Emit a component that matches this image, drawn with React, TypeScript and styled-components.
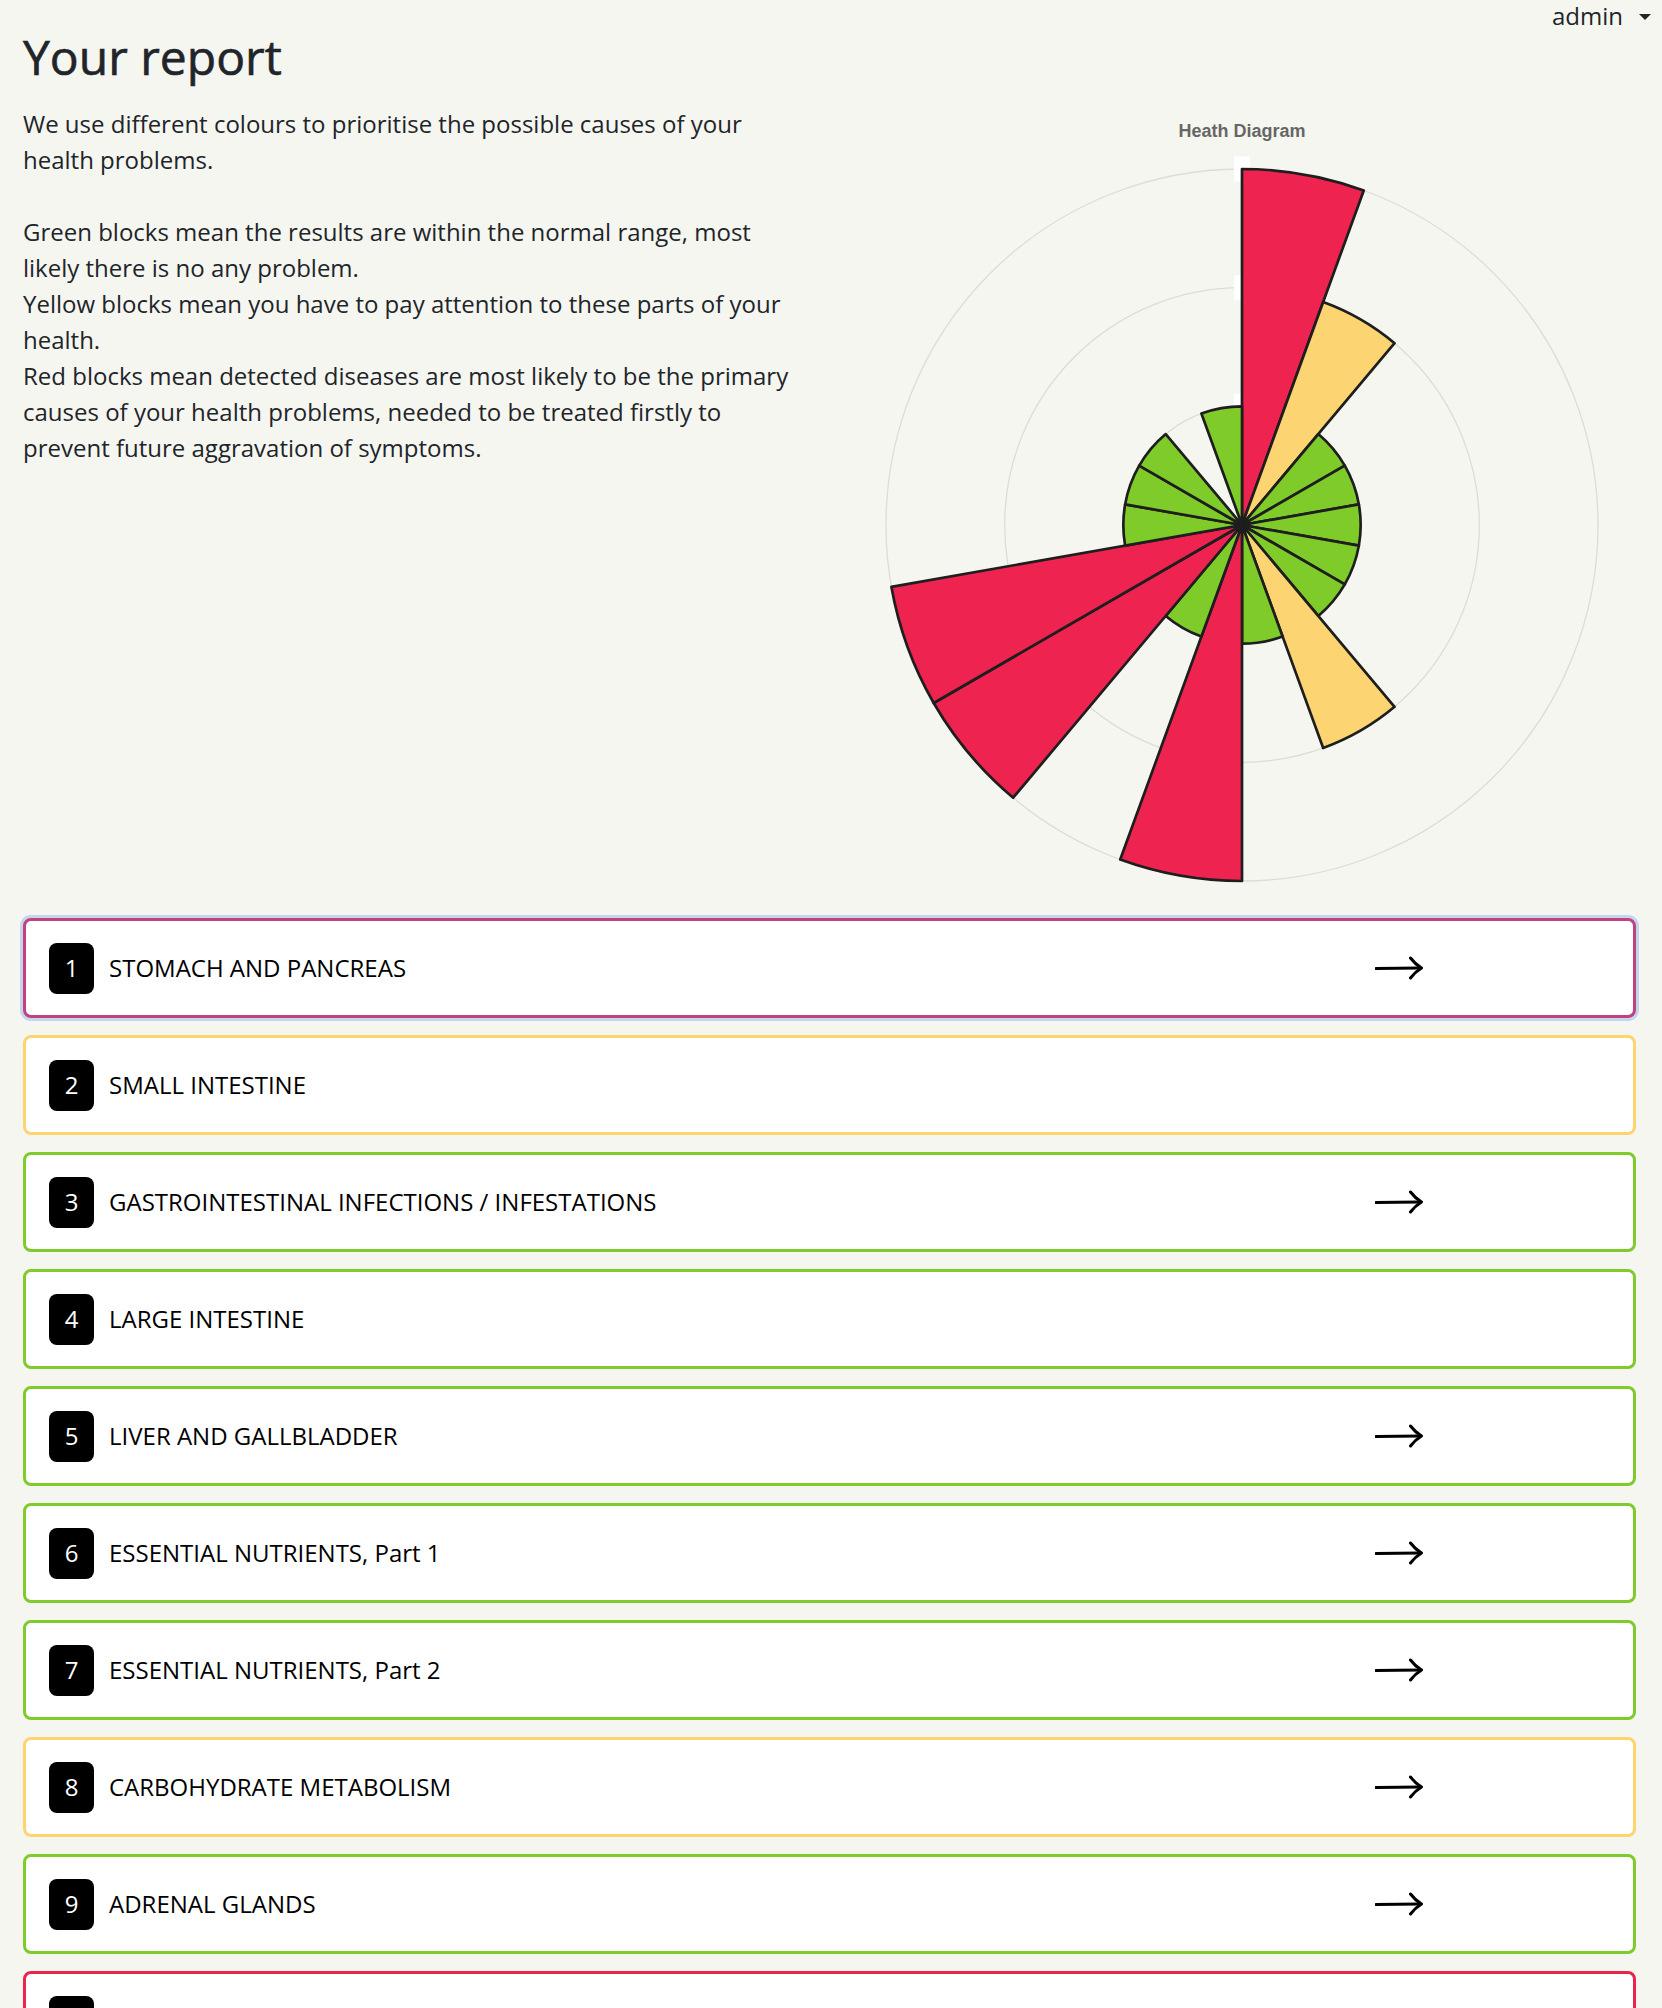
import React from "react";
import styled, { createGlobalStyle, css } from "styled-components";

const GlobalStyle = createGlobalStyle`
  html, body {
    margin: 0;
    padding: 0;
    background: #f6f6f1;
  }
  body {
    font-family: "Open Sans", "Noto Sans", "Liberation Sans", sans-serif;
    color: #212529;
  }
  * { box-sizing: border-box; }
`;

type Level = "red" | "yellow" | "green";

const BORDER: Record<Level, string> = {
  red: "#e8244f",
  yellow: "#fdd46e",
  green: "#7fcb2b",
};

const FILL: Record<Level, string> = {
  red: "#ee2350",
  yellow: "#fcd472",
  green: "#7fcb2a",
};

const TopBar = styled.header`
  display: flex;
  justify-content: flex-end;
  align-items: flex-start;
  height: 28px;
  padding-right: 11px;
`;

const UserToggle = styled.button`
  display: flex;
  align-items: center;
  gap: 16px;
  height: 32px;
  padding: 0;
  border: 0;
  background: transparent;
  font-family: "Open Sans", "Noto Sans", sans-serif;
  font-size: 24px;
  line-height: 32px;
  color: #212529;
  cursor: pointer;
`;

const Caret = styled.span`
  width: 0;
  height: 0;
  border-left: 6px solid transparent;
  border-right: 6px solid transparent;
  border-top: 6px solid #212529;
  margin-top: 1px;
`;

const Main = styled.main`
  padding: 0 26px 40px 23px;
`;

const ReportGrid = styled.section`
  display: grid;
  grid-template-columns: 1fr 1fr;
  column-gap: 37px;
`;

const Intro = styled.div`
  display: flex;
  flex-direction: column;
`;

const Title = styled.h1`
  margin: 0 0 20px 0;
  font-size: 48px;
  line-height: 1.2;
  font-weight: 500;
  color: #212529;
  -webkit-text-stroke: 0.6px #212529;
`;

const Paragraph = styled.p`
  margin: 0 0 36px 0;
  font-size: 24px;
  line-height: 36px;
  color: #212529;
`;

const ChartBox = styled.div`
  height: 890px;
  display: flex;
  justify-content: center;
`;

const CardList = styled.ul`
  list-style: none;
  margin: 0;
  padding: 0;
  display: flex;
  flex-direction: column;
  gap: 17px;
`;

const Card = styled.li<{ $level: Level; $focused?: boolean }>`
  display: flex;
  align-items: center;
  height: 100px;
  padding-left: 23px;
  background: #ffffff;
  border: 3px solid ${(p) => BORDER[p.$level]};
  border-radius: 8px;
  cursor: pointer;
  ${(p) =>
    p.$focused &&
    css`
      border-color: #c4427c;
      box-shadow: 0 0 0 3px #c3d5f0;
    `}
`;

const Badge = styled.span`
  display: flex;
  align-items: center;
  justify-content: center;
  width: 45px;
  height: 51px;
  border-radius: 8px;
  background: #000;
  color: #fff;
  font-size: 24px;
  line-height: 1;
  flex-shrink: 0;
`;

const Label = styled.span`
  flex: 1;
  margin-left: 15px;
  font-size: 24px;
  line-height: 1.3;
  color: #000;
`;

const ArrowSlot = styled.span`
  width: 48px;
  height: 26px;
  margin-right: 210px;
  display: flex;
  align-items: center;
`;

const Arrow = () => (
  <svg width="48" height="26" viewBox="0 0 48 26" fill="none">
    <path d="M1 13.5 L45 13" stroke="#000" strokeWidth="3" strokeLinecap="round" />
    <path
      d="M35.5 3 Q40 9 46.5 13 Q40 17 35.5 23"
      stroke="#000"
      strokeWidth="3"
      strokeLinecap="round"
      strokeLinejoin="round"
    />
  </svg>
);

type Item = { n: number; label: string; level: Level; arrow: boolean };

const ITEMS: Item[] = [
  { n: 1, label: "STOMACH AND PANCREAS", level: "red", arrow: true },
  { n: 2, label: "SMALL INTESTINE", level: "yellow", arrow: false },
  { n: 3, label: "GASTROINTESTINAL INFECTIONS / INFESTATIONS", level: "green", arrow: true },
  { n: 4, label: "LARGE INTESTINE", level: "green", arrow: false },
  { n: 5, label: "LIVER AND GALLBLADDER", level: "green", arrow: true },
  { n: 6, label: "ESSENTIAL NUTRIENTS, Part 1", level: "green", arrow: true },
  { n: 7, label: "ESSENTIAL NUTRIENTS, Part 2", level: "green", arrow: true },
  { n: 8, label: "CARBOHYDRATE METABOLISM", level: "yellow", arrow: true },
  { n: 9, label: "ADRENAL GLANDS", level: "green", arrow: true },
  { n: 10, label: "THYROID GLAND", level: "red", arrow: true },
];

// polar column values, clockwise from north, 20° each
const SECTORS: (Level | null)[] = [
  "red",
  "yellow",
  "green",
  "green",
  "green",
  "green",
  "green",
  "yellow",
  "green",
  "red",
  "green",
  "red",
  "red",
  "green",
  "green",
  "green",
  null,
  "green",
];

const LEVEL_VALUE: Record<Level, number> = { green: 1, yellow: 2, red: 3 };

const CX = 394;
const CY = 497;
const UNIT = 118.67;

function sectorPath(i: number, r: number) {
  const a0 = (i * 20 * Math.PI) / 180;
  const a1 = ((i + 1) * 20 * Math.PI) / 180;
  const x0 = CX + r * Math.sin(a0);
  const y0 = CY - r * Math.cos(a0);
  const x1 = CX + r * Math.sin(a1);
  const y1 = CY - r * Math.cos(a1);
  return `M${CX} ${CY} L${x0.toFixed(2)} ${y0.toFixed(2)} A${r} ${r} 0 0 1 ${x1.toFixed(2)} ${y1.toFixed(2)} Z`;
}

const HealthChart = () => (
  <svg width="788" height="890" viewBox="0 0 788 890">
    <text
      x={CX}
      y={109}
      textAnchor="middle"
      fontFamily='"Liberation Sans", Arial, sans-serif'
      fontSize="18"
      fontWeight="bold"
      fill="#666666"
    >
      Heath Diagram
    </text>
    {[1, 2, 3].map((k) => (
      <circle key={k} cx={CX} cy={CY} r={k * UNIT} fill="none" stroke="#dcdcd8" strokeWidth="1.3" />
    ))}
    {[1, 2, 3].map((k) => (
      <rect key={k} x={CX - 8} y={CY - k * UNIT - 12.5} width="16" height="25" fill="#ffffff" />
    ))}
    {SECTORS.map((lvl, i) =>
      lvl ? (
        <path
          key={i}
          d={sectorPath(i, LEVEL_VALUE[lvl] * UNIT)}
          fill={FILL[lvl]}
          stroke="#1e1e1e"
          strokeWidth="2.7"
          strokeLinejoin="round"
        />
      ) : null
    )}
  </svg>
);

export default function App() {
  return (
    <>
      <GlobalStyle />
      <TopBar>
        <UserToggle>
          admin
          <Caret />
        </UserToggle>
      </TopBar>
      <Main>
        <ReportGrid>
          <Intro>
            <Title>Your report</Title>
            <Paragraph>
              We use different colours to prioritise the possible causes of your health problems.
            </Paragraph>
            <Paragraph>
              Green blocks mean the results are within the normal range, most likely there is no any
              problem.
              <br />
              Yellow blocks mean you have to pay attention to these parts of your health.
              <br />
              Red blocks mean detected diseases are most likely to be the primary causes of your
              health problems, needed to be treated firstly to prevent future aggravation of
              symptoms.
            </Paragraph>
          </Intro>
          <ChartBox>
            <HealthChart />
          </ChartBox>
        </ReportGrid>
        <CardList>
          {ITEMS.map((it) => (
            <Card key={it.n} $level={it.level} $focused={it.n === 1}>
              <Badge>{it.n}</Badge>
              <Label>{it.label}</Label>
              {it.arrow && (
                <ArrowSlot>
                  <Arrow />
                </ArrowSlot>
              )}
            </Card>
          ))}
        </CardList>
      </Main>
    </>
  );
}
